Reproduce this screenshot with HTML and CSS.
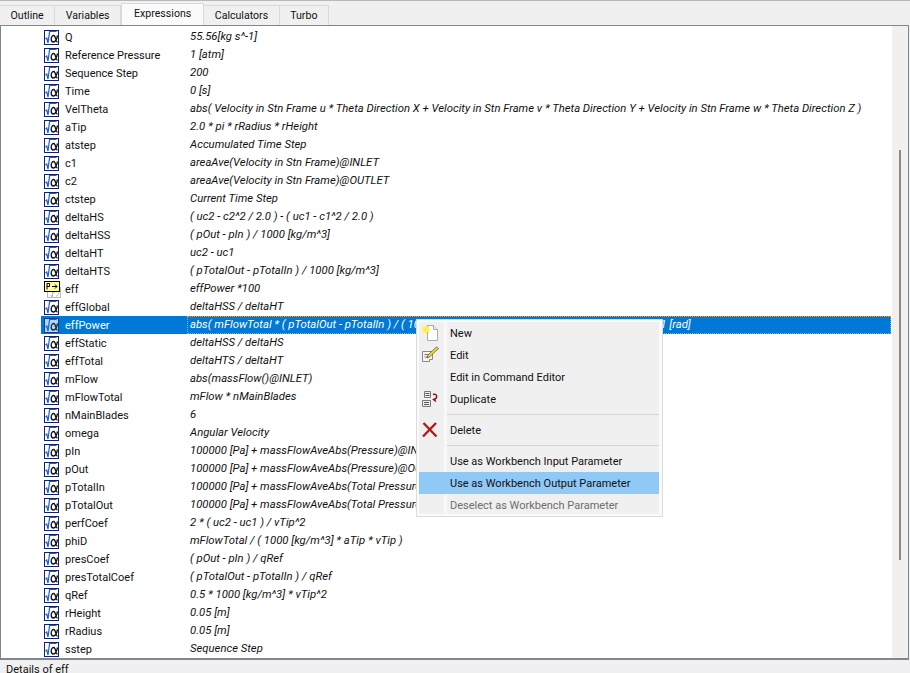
FILE: index.html
```html
<!DOCTYPE html>
<html lang="en">
<head>
    <meta charset="UTF-8">
    <title>Expressions</title>
    <link rel="stylesheet" href="styles.css">
</head>
<body>
    <svg class="defs" width="0" height="0">
        <symbol id="expr" viewBox="0 0 15 15">
            <rect x="0.5" y="0.5" width="14" height="14" fill="#fff" stroke="#10206a"/>
            <path d="M1.500 9l1.300-1 1.200 5 1.600-11.500h7" fill="none" stroke="#1a5fd0" stroke-width="1.200"/>
            <path d="M13.500 5.500c-1 5-2 6.500-4 6.500-1.500 0-2.300-1-2.300-2.800s1.100-3.700 2.600-3.700c2 0 1.800 6.500 3.700 6.500" fill="none" stroke="#111" stroke-width="1.300"/>
        </symbol>
        <symbol id="proc" viewBox="0 0 17 17">
            <g opacity="0.45">
                <rect x="3.500" y="6.500" width="13" height="10" fill="#fff" stroke="#667"/>
                <path d="M7 14l1 2 1-5h2M15 12c-1 3-2 3-3 3" fill="none" stroke="#557"/>
            </g>
            <rect x="0.500" y="0.500" width="15" height="10" fill="#ffff9c" stroke="#000"/>
            <path d="M3 8.500V2.500h2.500v3H3M8 5.500h5M11 3.500l2 2-2 2" fill="none" stroke="#000"/>
        </symbol>
    </svg>

    <div class="top-line"></div>

    <div class="tabs">
        <div class="tab">Outline</div>
        <div class="tab">Variables</div>
        <div class="tab active">Expressions</div>
        <div class="tab">Calculators</div>
        <div class="tab">Turbo</div>
    </div>

    <div class="pane">
        <div class="list">
            <div class="row"><svg class="icon"><use href="#expr"/></svg><span class="name">Q</span><span class="value">55.56[kg s^-1]</span></div>
            <div class="row"><svg class="icon"><use href="#expr"/></svg><span class="name">Reference Pressure</span><span class="value">1 [atm]</span></div>
            <div class="row"><svg class="icon"><use href="#expr"/></svg><span class="name">Sequence Step</span><span class="value">200</span></div>
            <div class="row"><svg class="icon"><use href="#expr"/></svg><span class="name">Time</span><span class="value">0 [s]</span></div>
            <div class="row"><svg class="icon"><use href="#expr"/></svg><span class="name">VelTheta</span><span class="value">abs( Velocity in Stn Frame u * Theta Direction X + Velocity in Stn Frame v * Theta Direction Y + Velocity in Stn Frame w * Theta Direction Z )</span></div>
            <div class="row"><svg class="icon"><use href="#expr"/></svg><span class="name">aTip</span><span class="value">2.0 * pi * rRadius * rHeight</span></div>
            <div class="row"><svg class="icon"><use href="#expr"/></svg><span class="name">atstep</span><span class="value">Accumulated Time Step</span></div>
            <div class="row"><svg class="icon"><use href="#expr"/></svg><span class="name">c1</span><span class="value">areaAve(Velocity in Stn Frame)@INLET</span></div>
            <div class="row"><svg class="icon"><use href="#expr"/></svg><span class="name">c2</span><span class="value">areaAve(Velocity in Stn Frame)@OUTLET</span></div>
            <div class="row"><svg class="icon"><use href="#expr"/></svg><span class="name">ctstep</span><span class="value">Current Time Step</span></div>
            <div class="row"><svg class="icon"><use href="#expr"/></svg><span class="name">deltaHS</span><span class="value">( uc2 - c2^2 / 2.0 ) - ( uc1 - c1^2 / 2.0 )</span></div>
            <div class="row"><svg class="icon"><use href="#expr"/></svg><span class="name">deltaHSS</span><span class="value">( pOut - pIn ) / 1000 [kg/m^3]</span></div>
            <div class="row"><svg class="icon"><use href="#expr"/></svg><span class="name">deltaHT</span><span class="value">uc2 - uc1</span></div>
            <div class="row"><svg class="icon"><use href="#expr"/></svg><span class="name">deltaHTS</span><span class="value">( pTotalOut - pTotalIn ) / 1000 [kg/m^3]</span></div>
            <div class="row"><svg class="icon proc"><use href="#proc"/></svg><span class="name">eff</span><span class="value">effPower *100</span></div>
            <div class="row"><svg class="icon"><use href="#expr"/></svg><span class="name">effGlobal</span><span class="value">deltaHSS / deltaHT</span></div>
            <div class="row selected"><svg class="icon"><use href="#expr"/></svg><span class="name">effPower</span><span class="value">abs( mFlowTotal * ( pTotalOut - pTotalIn ) / ( 1000 [kg/m^3] * Torque_z()@Blade * omega * 2 ) ) * 1 [rad]</span></div>
            <div class="row"><svg class="icon"><use href="#expr"/></svg><span class="name">effStatic</span><span class="value">deltaHSS / deltaHS</span></div>
            <div class="row"><svg class="icon"><use href="#expr"/></svg><span class="name">effTotal</span><span class="value">deltaHTS / deltaHT</span></div>
            <div class="row"><svg class="icon"><use href="#expr"/></svg><span class="name">mFlow</span><span class="value">abs(massFlow()@INLET)</span></div>
            <div class="row"><svg class="icon"><use href="#expr"/></svg><span class="name">mFlowTotal</span><span class="value">mFlow * nMainBlades</span></div>
            <div class="row"><svg class="icon"><use href="#expr"/></svg><span class="name">nMainBlades</span><span class="value">6</span></div>
            <div class="row"><svg class="icon"><use href="#expr"/></svg><span class="name">omega</span><span class="value">Angular Velocity</span></div>
            <div class="row"><svg class="icon"><use href="#expr"/></svg><span class="name">pIn</span><span class="value">100000 [Pa] + massFlowAveAbs(Pressure)@INLET</span></div>
            <div class="row"><svg class="icon"><use href="#expr"/></svg><span class="name">pOut</span><span class="value">100000 [Pa] + massFlowAveAbs(Pressure)@OUTLET</span></div>
            <div class="row"><svg class="icon"><use href="#expr"/></svg><span class="name">pTotalIn</span><span class="value">100000 [Pa] + massFlowAveAbs(Total Pressure)@INLET</span></div>
            <div class="row"><svg class="icon"><use href="#expr"/></svg><span class="name">pTotalOut</span><span class="value">100000 [Pa] + massFlowAveAbs(Total Pressure)@OUTLET</span></div>
            <div class="row"><svg class="icon"><use href="#expr"/></svg><span class="name">perfCoef</span><span class="value">2 * ( uc2 - uc1 ) / vTip^2</span></div>
            <div class="row"><svg class="icon"><use href="#expr"/></svg><span class="name">phiD</span><span class="value">mFlowTotal / ( 1000 [kg/m^3] * aTip * vTip )</span></div>
            <div class="row"><svg class="icon"><use href="#expr"/></svg><span class="name">presCoef</span><span class="value">( pOut - pIn ) / qRef</span></div>
            <div class="row"><svg class="icon"><use href="#expr"/></svg><span class="name">presTotalCoef</span><span class="value">( pTotalOut - pTotalIn ) / qRef</span></div>
            <div class="row"><svg class="icon"><use href="#expr"/></svg><span class="name">qRef</span><span class="value">0.5 * 1000 [kg/m^3] * vTip^2</span></div>
            <div class="row"><svg class="icon"><use href="#expr"/></svg><span class="name">rHeight</span><span class="value">0.05 [m]</span></div>
            <div class="row"><svg class="icon"><use href="#expr"/></svg><span class="name">rRadius</span><span class="value">0.05 [m]</span></div>
            <div class="row"><svg class="icon"><use href="#expr"/></svg><span class="name">sstep</span><span class="value">Sequence Step</span></div>
        </div>
        <div class="scrollbar"><div class="thumb"></div></div>
    </div>

    <div class="details">Details of eff</div>

    <div class="menu">
        <div class="menu-body">
            <div class="menu-item">
                <svg class="menu-icon" viewBox="0 0 18 18"><path d="M6.500 1.500h6l4 4v11h-10z" fill="#fff" stroke="#a9adb3"/><path d="M12.500 1.500v4h4" fill="#eee" stroke="#a9adb3"/><path d="M5 0.500l1 2.500 2.500-1-1 2.500 2.500 1-2.500 1 1 2.500-2.500-1-1 2.500-1-2.500-2.500 1 1-2.500-2.500-1 2.500-1-1-2.500 2.500 1z" fill="#fff23a"/></svg>
                <span>New</span>
            </div>
            <div class="menu-item">
                <svg class="menu-icon" viewBox="0 0 18 18"><path d="M1.500 5.500h10v8h-3v2h-7z" fill="#f4f4f4" stroke="#888"/><path d="M3.500 8.500h4M3.500 11h3" stroke="#777"/><path d="M6 12l1-3 8.500-8 2 1.500-8.500 8z" fill="#f2e21c" stroke="#444" stroke-width="0.700"/></svg>
                <span>Edit</span>
            </div>
            <div class="menu-item">
                <span class="menu-icon"></span>
                <span>Edit in Command Editor</span>
            </div>
            <div class="menu-item">
                <svg class="menu-icon" viewBox="0 0 18 18"><path d="M3.500 1.500h6v6h-6zM1.500 10.500h8v6h-8z" fill="#f2f2f2" stroke="#777"/><path d="M4.500 3.500h4M4.500 5.500h4M3 12.500h5M3 14.500h5" stroke="#555"/><path d="M12 4.500c4-1.500 5 3 1.500 5M15 11.500l-2.500-2 2.500-1" fill="none" stroke="#8b0d0d" stroke-width="1.400"/></svg>
                <span>Duplicate</span>
            </div>
            <div class="menu-sep"></div>
            <div class="menu-item">
                <svg class="menu-icon" viewBox="0 0 18 18"><path d="M2.500 2l13 13.500M15 2L2 15.500" stroke="#b01c1c" stroke-width="2.400" fill="none"/></svg>
                <span>Delete</span>
            </div>
            <div class="menu-sep"></div>
            <div class="menu-item">
                <span class="menu-icon"></span>
                <span>Use as Workbench Input Parameter</span>
            </div>
            <div class="menu-item hot">
                <span class="menu-icon"></span>
                <span>Use as Workbench Output Parameter</span>
            </div>
            <div class="menu-item off">
                <span class="menu-icon"></span>
                <span>Deselect as Workbench Parameter</span>
            </div>
        </div>
    </div>
</body>
</html>
```

FILE: styles.css
```css
* {
    margin: 0;
    padding: 0;
    box-sizing: border-box;
}

html, body {
    height: 100%;
    overflow: hidden;
}

body {
    font-family: Roboto, "Open Sans", sans-serif;
    font-size: 11px;
    color: #111;
    background: #f0f0f0;
    display: flex;
    flex-direction: column;
}

.defs {
    display: block;
    height: 0;
}

.top-line {
    height: 1px;
    background: #b9b9b9;
    flex-shrink: 0;
}

.tabs {
    display: flex;
    align-items: flex-end;
    height: 24px;
    flex-shrink: 0;
    font-size: 10.6px;
}

.tab {
    height: 20px;
    padding: 0 10.5px;
    line-height: 20px;
    border: 1px solid #d9d9d9;
    border-bottom: none;
    border-left: none;
    background: #f0f0f0;
}

.tab.active {
    height: 22px;
    line-height: 20px;
    padding: 0 12px;
    background: #fbfbfb;
    border-left: 1px solid #d9d9d9;
}

.pane {
    height: 635px;
    flex-shrink: 0;
    margin-right: 1px;
    display: flex;
    background: #fff;
    border: 2px solid #82878f;
    border-width: 1px 1px 2px 1px;
}

.list {
    flex: 1;
    padding: 2px 1px 0 40px;
    min-width: 0;
}

.row {
    display: flex;
    align-items: center;
    height: 18px;
    white-space: nowrap;
}

.icon {
    width: 15px;
    height: 15px;
    margin-left: 3px;
    flex-shrink: 0;
}

.icon.proc {
    width: 17px;
    height: 17px;
    margin-right: -2px;
}

.name {
    width: 125px;
    margin-left: 6px;
    flex-shrink: 0;
}

.value {
    font-size: 11.3px;
    font-style: italic;
    flex: 1;
    height: 18px;
    line-height: 18px;
}

.row.selected {
    background: #0078d7;
    color: #fff;
}

.row.selected .icon {
    opacity: 0.7;
}

.row.selected .value {
    border: 1px dotted #f59a23;
    line-height: 16px;
    margin-left: -3px;
    padding-left: 2px;
}

.scrollbar {
    width: 16px;
    background: #f0f0f0;
    padding: 124px 0 0 7px;
    flex-shrink: 0;
}

.thumb {
    width: 2px;
    height: 410px;
    background: #8a8a8a;
}

.details {
    padding: 3px 0 0 6px;
    white-space: nowrap;
}

.menu {
    position: absolute;
    left: 416px;
    top: 319px;
    width: 247px;
    height: 198px;
    padding: 2px 3px 2px 2px;
    background: #fafafa;
    border: 1px solid #dcdcdc;
}

.menu-body {
    position: relative;
    height: 100%;
    background: #f0f0f0;
}

/* light strip between icon gutter and labels */
.menu-body::before {
    content: '';
    position: absolute;
    left: 25px;
    top: 0;
    bottom: 0;
    width: 3px;
    background: #f8f8f8;
}

.menu-item {
    position: relative;
    display: flex;
    align-items: center;
    height: 22px;
    gap: 11px;
    padding-left: 2px;
}

.menu-icon {
    width: 18px;
    height: 18px;
    flex-shrink: 0;
}

.menu-item.hot {
    background: #90c8f6;
}

.menu-item.off {
    color: #6d6d6d;
}

.menu-sep {
    position: relative;
    height: 1px;
    margin: 4px 0 4px 28px;
    background: #d3d3d3;
}
```
